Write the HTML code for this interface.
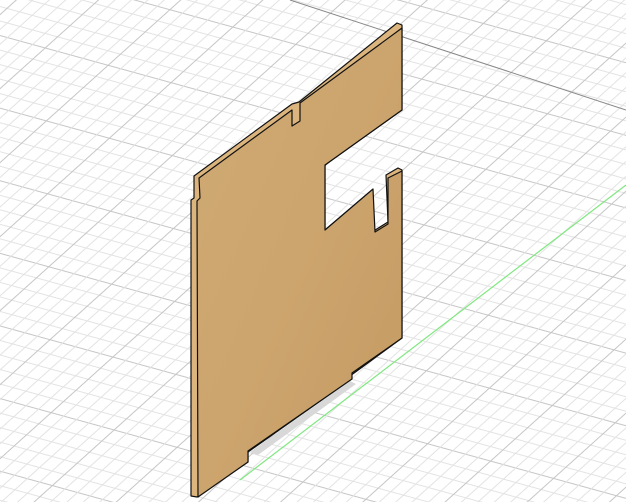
<!DOCTYPE html>
<html><head><style>html,body{margin:0;padding:0;background:#fff;overflow:hidden}svg{display:block}</style></head>
<body>
<svg width="626" height="502" viewBox="0 0 626 502" xmlns="http://www.w3.org/2000/svg">
<defs>
<pattern id="pa" width="400" height="70" patternUnits="userSpaceOnUse" patternTransform="translate(0,35) rotate(15.4)">
<rect x="0" y="0" width="400" height="1" fill="#c6c6c6"/>
<rect x="0" y="14" width="400" height="1" fill="#e3e3e3"/>
<rect x="0" y="28" width="400" height="1" fill="#e3e3e3"/>
<rect x="0" y="42" width="400" height="1" fill="#e3e3e3"/>
<rect x="0" y="56" width="400" height="1" fill="#e3e3e3"/>
</pattern>
<pattern id="pb" width="400" height="55" patternUnits="userSpaceOnUse" patternTransform="translate(40,200) rotate(-42)">
<rect x="0" y="0" width="400" height="1" fill="#c6c6c6"/>
<rect x="0" y="11" width="400" height="1" fill="#e3e3e3"/>
<rect x="0" y="22" width="400" height="1" fill="#e3e3e3"/>
<rect x="0" y="33" width="400" height="1" fill="#e3e3e3"/>
<rect x="0" y="44" width="400" height="1" fill="#e3e3e3"/>
</pattern>
<linearGradient id="wood" x1="0" y1="0" x2="1" y2="1">
<stop offset="0" stop-color="#d0aa74"/>
<stop offset="0.5" stop-color="#cca46d"/>
<stop offset="1" stop-color="#c49a62"/>
</linearGradient>
</defs>
<rect width="626" height="502" fill="#fff"/>
<rect width="626" height="502" fill="url(#pa)"/>
<rect width="626" height="502" fill="url(#pb)"/>
<line x1="290" y1="0" x2="626" y2="110" stroke="#888" stroke-width="1"/>
<line x1="240" y1="480" x2="626" y2="185" stroke="#7fe87f" stroke-width="1.2"/>
<polygon points="250,452 350,381 356,384 258,455" fill="#d8d8d8"/>
<g stroke="#111" stroke-width="1.2" stroke-linejoin="round">
<polygon points="194,176 292,104 299,102 397,23 402,25 402,110 325,165 325,230 372,190 372,232 388,222 386,175 398,168 402,170 402,338 350,376 350,380 248,452 248,462 197,497 191,496 191,200 194,198" fill="#dcb57e"/>
<polygon points="199,178 292,110 292,126 300,121 300,103 402,28 402,110 325,165 325,230 373,189 375,232 388,224 388,178 402,171 402,338 352,373 352,379 248,451 248,462 198,497 197,201 200,198" fill="url(#wood)"/>
</g>
</svg>
</body></html>
